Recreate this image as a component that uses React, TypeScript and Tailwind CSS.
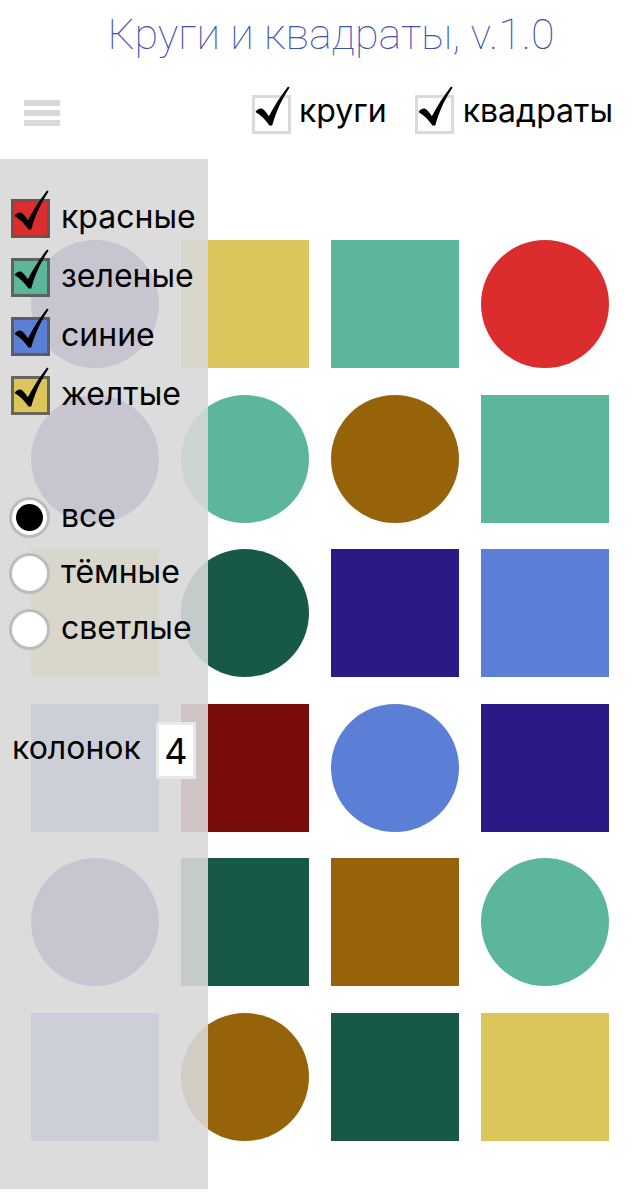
import React from 'react'

type Shape = 'c' | 's'

const COLORS: Record<string, string> = {
  navy: 'bg-[#2a1a85]',
  yellow: 'bg-[#dcc55a]',
  teal: 'bg-[#5cb69c]',
  red: 'bg-[#db2d2d]',
  brown: 'bg-[#96630a]',
  green: 'bg-[#185846]',
  blue: 'bg-[#5b7fd6]',
  darkred: 'bg-[#7a0b0b]',
}

const GRID: [Shape, string][][] = [
  [['c', 'navy'], ['s', 'yellow'], ['s', 'teal'], ['c', 'red']],
  [['c', 'navy'], ['c', 'teal'], ['c', 'brown'], ['s', 'teal']],
  [['s', 'yellow'], ['c', 'green'], ['s', 'navy'], ['s', 'blue']],
  [['s', 'blue'], ['s', 'darkred'], ['c', 'blue'], ['s', 'navy']],
  [['c', 'navy'], ['s', 'green'], ['s', 'brown'], ['c', 'teal']],
  [['s', 'blue'], ['c', 'brown'], ['s', 'green'], ['s', 'yellow']],
]

const FILTERS = [
  { label: 'красные', color: 'bg-[#db2d2d]' },
  { label: 'зеленые', color: 'bg-[#5cb69c]' },
  { label: 'синие', color: 'bg-[#5b7fd6]' },
  { label: 'желтые', color: 'bg-[#dcc55a]' },
]

const TONES = ['все', 'тёмные', 'светлые']

// heavy check mark, drawn in the box's own coordinates
function Check() {
  return (
    <svg
      className="absolute left-[-3px] top-[-12px] w-[40px] h-[45px] pointer-events-none"
      viewBox="0 -9 40 45"
    >
      <path
        d="M3.5 17 C5 14.8 7.3 13.2 9.6 13.6 C12 14.3 14.4 17.6 16.9 21.2 C22 11 28.8 0.8 36 -8.6 L37.6 -7.6 C30.4 3.6 24.2 15.4 20.2 30.6 L17.4 30.6 C14.2 25.2 9 20.2 3.5 17 Z"
        fill="#000"
      />
    </svg>
  )
}

function Checkbox({ className }: { className: string }) {
  return (
    <div className={`relative w-[39px] h-[39px] shrink-0 border-[3px] ${className}`}>
      <Check />
    </div>
  )
}

function Radio({ checked }: { checked: boolean }) {
  return (
    <div className="w-[41px] h-[41px] shrink-0 rounded-full border-[3px] border-[#bcbcbc] bg-white flex items-center justify-center">
      {checked && <div className="w-[27px] h-[27px] rounded-full bg-black" />}
    </div>
  )
}

export default function App() {
  return (
    <div className="relative w-[640px] h-[1200px] bg-white text-black font-['Inter',sans-serif] overflow-hidden">
      <h1 className="pt-[12px] pl-[22px] text-center text-[43px] leading-[45px] font-thin text-[#3f51b5] font-['Roboto',sans-serif]">
        Круги и квадраты, v.1.0
      </h1>

      <header className="mt-[38px] h-[39px] flex justify-between pl-[24px] pr-[27px]">
        <div className="mt-[5px] flex flex-col gap-[4px]">
          <div className="w-[36px] h-[6px] bg-[#d9d9d9]" />
          <div className="w-[36px] h-[6px] bg-[#d9d9d9]" />
          <div className="w-[36px] h-[6px] bg-[#d9d9d9]" />
        </div>
        <div className="flex items-center gap-[28px] text-[32px]">
          <label className="flex items-center gap-[8px]">
            <Checkbox className="bg-white border-[#dadada]" />
            <span className="mb-[7px]">круги</span>
          </label>
          <label className="flex items-center gap-[9px]">
            <Checkbox className="bg-white border-[#dadada]" />
            <span className="mb-[7px]">квадраты</span>
          </label>
        </div>
      </header>

      <main className="mt-[106px] pl-[31px] grid grid-cols-[repeat(4,128px)] gap-x-[22px] gap-y-[26.6px]">
        {GRID.flat().map(([shape, color], i) => (
          <div
            key={i}
            className={`w-[128px] h-[128px] ${COLORS[color]} ${shape === 'c' ? 'rounded-full' : ''}`}
          />
        ))}
      </main>

      <aside className="absolute left-0 top-[159px] w-[208px] h-[1030px] z-10 bg-[rgba(216,216,216,0.9)] pt-[40px] pl-[11px] text-[32px]">
        <div className="flex flex-col gap-[20px]">
          {FILTERS.map(f => (
            <label key={f.label} className="h-[39px] flex items-center gap-[11px]">
              <Checkbox className={`${f.color} border-[rgba(90,90,90,0.9)]`} />
              <span className="mb-[4px]">{f.label}</span>
            </label>
          ))}
        </div>

        <div className="mt-[82px] -ml-[2px] flex flex-col gap-[15px]">
          {TONES.map((t, i) => (
            <label key={t} className="h-[41px] flex items-center gap-[11px]">
              <Radio checked={i === 0} />
              <span className="mb-[4px]">{t}</span>
            </label>
          ))}
        </div>

        <div className="mt-[72px] pl-[1px] h-[57px] flex items-center">
          <span className="w-[144px] mb-[6px]">колонок</span>
          <div className="w-[40px] h-[57px] border-[3px] border-[#e8e8e8] bg-white flex items-center justify-center text-[36px]">
            4
          </div>
        </div>
      </aside>
    </div>
  )
}
